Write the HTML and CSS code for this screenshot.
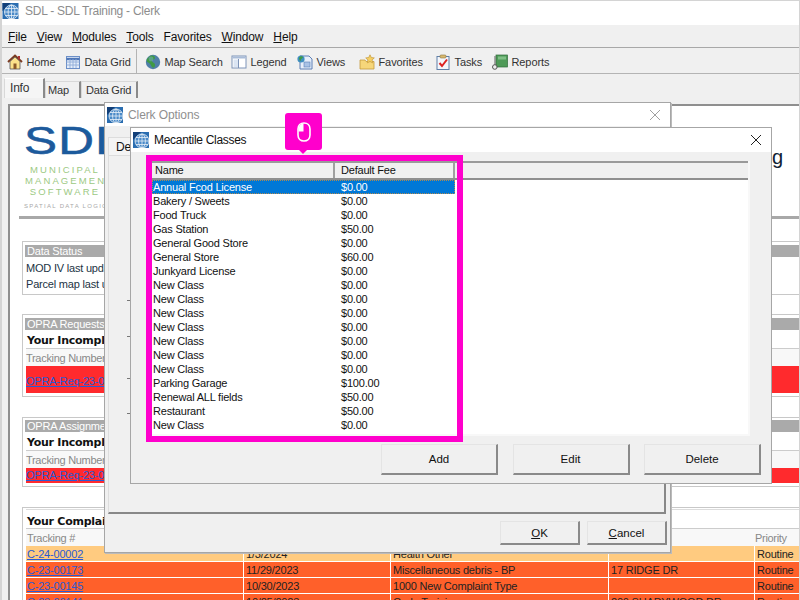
FILE: index.html
```html
<!DOCTYPE html>
<html lang="en">
<head>
<meta charset="utf-8">
<title>SDL - SDL Training - Clerk</title>
<link rel="stylesheet" href="styles.css">
</head>
<body>
<svg class="defs" width="0" height="0" aria-hidden="true">
  <symbol id="globe" viewBox="0 0 16 16">
    <rect width="16" height="16" fill="#2a6db0"/>
    <path d="M0 0h8L0 8z" fill="#123f78"/>
    <circle cx="9" cy="9" r="7" fill="#4a8ac8"/>
    <g fill="none" stroke="#e8f0f8" stroke-width=".8">
      <circle cx="9" cy="9" r="7"/>
      <ellipse cx="9" cy="9" rx="3.400" ry="7"/>
      <path d="M9 2v14M2 9h14M3 5.500h12M3 12.500h12"/>
    </g>
  </symbol>
</svg>
<div class="app">
  <header class="titlebar">
    <svg class="appicon"><use href="#globe"/></svg>
    <span>SDL - SDL Training - Clerk</span>
  </header>
  <nav class="menubar">
    <span><u>F</u>ile</span><span><u>V</u>iew</span><span><u>M</u>odules</span><span><u>T</u>ools</span><span>Favorites</span><span><u>W</u>indow</span><span><u>H</u>elp</span>
  </nav>
  <div class="toolbar">
    <span class="tool"><svg viewBox="0 0 16 16"><path d="M1 8 8 1.500 15 8" fill="none" stroke="#7a3a20" stroke-width="2"/><path d="M3 7.500 8 3l5 4.500V15H3z" fill="#fbe28a" stroke="#555" stroke-width=".8"/><rect x="6.500" y="9.500" width="3" height="5.500" fill="#8a5a2a"/><rect x="11" y="2" width="2" height="3.500" fill="#a33"/></svg>Home</span>
    <span class="tool"><svg viewBox="0 0 16 16"><rect x="1.500" y="2.500" width="13" height="12" fill="#e4edf9" stroke="#6c8fc7"/><path d="M1.500 5h13" stroke="#4f77b8" stroke-width="2.400"/><path d="M1.500 8h13M1.500 11h13M5 5v9M8 5v9M11 5v9" stroke="#8fabd8" stroke-width=".9"/></svg>Data Grid</span>
    <span class="sep"></span>
    <span class="tool"><svg viewBox="0 0 16 16"><circle cx="8" cy="8" r="7.200" fill="#4f7fa8"/><path d="M5 2c3-1 5 0 5 2s-3 1-3 3 3 1 3 4-2 3-3 2-1-3-3-4-3-2-2-4z" fill="#3f9a45"/><circle cx="6" cy="5" r="2.400" fill="#7fb0d0" opacity=".45"/></svg>Map Search</span>
    <span class="tool"><svg viewBox="0 0 16 16"><rect x="1" y="2" width="14" height="12" fill="#fff" stroke="#7d93b8"/><rect x="1.500" y="2.500" width="13" height="2" fill="#a9bcd8"/><rect x="2.500" y="5.500" width="4.500" height="7.500" fill="#dbe5f3"/><path d="M7.500 5v9" stroke="#7d93b8"/></svg>Legend</span>
    <span class="tool"><svg viewBox="0 0 16 16"><path d="M3 2h9l3 3v10H3z" fill="#e6eefa" stroke="#5c7fb5"/><rect x="7" y="8" width="6" height="5" fill="#a9c2e6" stroke="#5c7fb5" stroke-width=".6"/><circle cx="4" cy="5" r="3.600" fill="#3f8fc0"/><path d="M2 4c1-2 3-2 4-1 0 2-3 1-2 4-1 0-2-1-2-3z" fill="#3f9a45"/></svg>Views</span>
    <span class="tool"><svg viewBox="0 0 16 16"><path d="M1 6h5l1 1.500h8V15H1z" fill="#f6d67a" stroke="#c49a3c" stroke-width=".8"/><path d="m11 .8 1.300 2.700 3 .4-2.200 2 .6 3L11 7.500 8.300 8.900l.6-3-2.200-2 3-.4z" fill="#f5cf63" stroke="#c49a3c" stroke-width=".7"/></svg>Favorites</span>
    <span class="tool"><svg viewBox="0 0 16 16"><rect x="2" y="2.500" width="12" height="13" fill="#f4f6fb" stroke="#5f7fa8"/><rect x="5" y="1" width="6" height="3" rx="1" fill="#d9b96e" stroke="#8a7440" stroke-width=".6"/><path d="m4.500 9 2.500 3 5-6.500" fill="none" stroke="#d22" stroke-width="2"/></svg>Tasks</span>
    <span class="tool"><svg viewBox="0 0 16 16"><rect x="4" y="1" width="11.500" height="12" fill="#4f9a58" stroke="#2f6a3a" stroke-width=".7"/><rect x="6" y="2.500" width="8" height="3" fill="#7fbf85"/><path d="M3 2v10" stroke="#777" stroke-width="1.200"/><circle cx="2.800" cy="13" r="2.300" fill="#eee" stroke="#555"/></svg>Reports</span>
  </div>
  <div class="tabs">
    <span class="tab active">Info</span><span class="tab tab-map">Map</span><span class="tab tab-grid">Data Grid</span>
  </div>
  <main class="panel">
    <div class="brand">
      <div class="logo">
        <div class="logo-mark">SDL</div>
        <div class="logo-sub">MUNICIPAL<br>MANAGEMENT<br>SOFTWARE</div>
        <div class="logo-tag">SPATIAL DATA LOGIC</div>
      </div>
      <div class="brand-title">Training</div>
    </div>
    <hr class="rule">
    <section class="box status">
      <h2 class="box-head">Data Status</h2>
      <p class="line">MOD IV last updated</p>
      <p class="line">Parcel map last updated</p>
    </section>
    <section class="box requests">
      <h2 class="box-head">OPRA Requests</h2>
      <h3 class="sub">Your Incomplete</h3>
      <div class="col-head">Tracking Number</div>
      <div class="alert tall"><a href="#">OPRA-Req-23-00</a></div>
    </section>
    <section class="box assign">
      <h2 class="box-head">OPRA Assignments</h2>
      <h3 class="sub">Your Incomplete</h3>
      <div class="col-head">Tracking Number</div>
      <div class="alert"><a href="#">OPRA-Req-23-00</a></div>
    </section>
    <section class="box complaints">
      <h3 class="sub">Your Complaints</h3>
      <div class="grid col-head"><span>Tracking #</span><span></span><span></span><span></span><span>Priority</span></div>
      <div class="grid row soft"><a href="#">C-24-00002</a><span>1/3/2024</span><span>Health Other</span><span></span><span>Routine</span></div>
      <div class="grid row hot"><a href="#">C-23-00173</a><span>11/29/2023</span><span>Miscellaneous debris - BP</span><span>17 RIDGE DR</span><span>Routine</span></div>
      <div class="grid row hot"><a href="#">C-23-00145</a><span>10/30/2023</span><span>1000 New Complaint Type</span><span></span><span>Routine</span></div>
      <div class="grid row hot"><a href="#">C-23-00141</a><span>10/25/2023</span><span>Code Training</span><span>200 SHADYWOOD DR</span><span>Routine</span></div>
    </section>
  </main>
</div>

<div class="dialog options">
  <div class="dlg-title dim"><svg class="appicon"><use href="#globe"/></svg><span>Clerk Options</span><span class="close"><svg viewBox="0 0 12 12"><path d="M1 1l10 10M11 1 1 11"/></svg></span></div>
  <div class="opt-body">
    <div class="opt-tab">De</div>
    <div class="opt-page">
      <i class="tick t1"></i><i class="tick t2"></i><i class="tick t3"></i><i class="tick t4"></i>
    </div>
    <div class="opt-actions">
      <button class="btn small"><u>O</u>K</button>
      <button class="btn small"><u>C</u>ancel</button>
    </div>
  </div>
</div>

<div class="dialog classes">
  <div class="dlg-title"><svg class="appicon"><use href="#globe"/></svg><span>Mecantile Classes</span><span class="close"><svg viewBox="0 0 12 12"><path d="M1 1l10 10M11 1 1 11"/></svg></span></div>
  <div class="cls-body">
    <div class="list">
      <div class="list-head"><span class="c1">Name</span><span class="c2">Default Fee</span></div>
      <div class="list-row sel"><span class="c1">Annual Fcod License</span><span class="c2">$0.00</span></div>
      <div class="list-row"><span class="c1">Bakery / Sweets</span><span class="c2">$0.00</span></div>
      <div class="list-row"><span class="c1">Food Truck</span><span class="c2">$0.00</span></div>
      <div class="list-row"><span class="c1">Gas Station</span><span class="c2">$50.00</span></div>
      <div class="list-row"><span class="c1">General Good Store</span><span class="c2">$0.00</span></div>
      <div class="list-row"><span class="c1">General Store</span><span class="c2">$60.00</span></div>
      <div class="list-row"><span class="c1">Junkyard License</span><span class="c2">$0.00</span></div>
      <div class="list-row"><span class="c1">New Class</span><span class="c2">$0.00</span></div>
      <div class="list-row"><span class="c1">New Class</span><span class="c2">$0.00</span></div>
      <div class="list-row"><span class="c1">New Class</span><span class="c2">$0.00</span></div>
      <div class="list-row"><span class="c1">New Class</span><span class="c2">$0.00</span></div>
      <div class="list-row"><span class="c1">New Class</span><span class="c2">$0.00</span></div>
      <div class="list-row"><span class="c1">New Class</span><span class="c2">$0.00</span></div>
      <div class="list-row"><span class="c1">New Class</span><span class="c2">$0.00</span></div>
      <div class="list-row"><span class="c1">Parking Garage</span><span class="c2">$100.00</span></div>
      <div class="list-row"><span class="c1">Renewal ALL fields</span><span class="c2">$50.00</span></div>
      <div class="list-row"><span class="c1">Restaurant</span><span class="c2">$50.00</span></div>
      <div class="list-row"><span class="c1">New Class</span><span class="c2">$0.00</span></div>
    </div>
    <div class="cls-actions">
      <button class="btn">Add</button>
      <button class="btn">Edit</button>
      <button class="btn">Delete</button>
    </div>
  </div>
</div>

<div class="highlight"></div>
<div class="callout">
  <svg viewBox="0 0 14 20"><path d="M7 1C3.500 1 1 3.500 1 7v6c0 3.500 2.500 6 6 6s6-2.500 6-6V7c0-3.500-2.500-6-6-6z" fill="none" stroke="#fff" stroke-width="1.600"/><path d="M6.500 1.500C3.500 1.800 1.500 4 1.500 7v2.500h5z" fill="#fff"/></svg>
</div>
</body>
</html>
```
FILE: styles.css
```css
* { box-sizing: border-box; }
html, body { margin: 0; padding: 0; }
body {
  width: 800px;
  height: 600px;
  overflow: hidden;
  position: relative;
  background: #f0f0f0;
  font: 11px/14px "Liberation Sans", Arial, sans-serif;
  letter-spacing: -.2px;
  color: #111;
}
.defs { position: absolute; }
.app {
  height: 600px;
  display: flex;
  flex-direction: column;
  border: solid #d4d4d4;
  border-width: 1px 1px 0 2px;
}
.appicon { width: 16px; height: 16px; flex: none; }

.titlebar {
  height: 24px;
  background: #fff;
  display: flex;
  align-items: center;
  gap: 6px;
  padding: 0 0 4px;
  font-size: 12px;
  letter-spacing: -.25px;
  color: #8d8d8d;
}
.titlebar .appicon { width: 17px; }
.menubar {
  height: 23px;
  display: flex;
  align-items: center;
  gap: 10px;
  padding: 2px 0 0 6px;
  font-size: 12px;
  letter-spacing: -.15px;
  border-bottom: 1px solid #a8a8a8;
}
.toolbar {
  height: 26px;
  display: grid;
  grid-template-columns: 58px 71px 9px 86px 66px 62px 76px 57px auto;
  align-items: center;
  padding: 2px 0 0 5px;
  border-bottom: 1px solid #b4b4b4;
  letter-spacing: -.1px;
  color: #333;
}
.tool { display: flex; align-items: center; gap: 3.500px; }
.tool svg { width: 16px; height: 16px; flex: none; }
.sep { width: 1px; height: 24px; background: #b4b4b4; margin-top: -2px; }

.tabs { height: 30px; display: flex; align-items: flex-end; padding: 0 0 6px 2px; }
.tab {
  height: 17px;
  padding: 1px 0 0 4px;
  background: #f0f0f0;
  border-right: 2px solid #8a8a8a;
  border-top: 1px solid #d8d8d8;
  border-left: 1px solid #d8d8d8;
  color: #333;
}
.tab.active {
  width: 41px;
  height: 20px;
  padding: 2px 0 0 5px;
  font-size: 12px;
  background: #f5f5f5;
  border-top-color: #fff;
}
.tab-map { width: 36px; padding-left: 2px; }
.tab-grid { width: 57px; padding-left: 4px; }

.panel {
  flex: 1;
  min-height: 0;
  margin-left: 6px;
  background: #fff;
  border: solid #8f8f8f;
  border-width: 2px 0 0 2px;
  padding: 0 0 0 10px;
  overflow: hidden;
  color: #222;
}
.brand { height: 110px; display: flex; justify-content: space-between; }
.logo { width: 150px; padding: 18px 0 0 4px; }
.logo-mark {
  font: 400 38px/34px "Liberation Sans", Arial, sans-serif;
  -webkit-text-stroke: .6px #1c5a9c;
  color: #1c5a9c;
  letter-spacing: 1px;
  transform: scaleX(1.3);
  transform-origin: left;
}
.logo-sub {
  margin: 6px 0 0 1px;
  width: 80px;
  font-size: 9.500px;
  line-height: 11px;
  letter-spacing: 2.100px;
  color: #9cc983;
  text-align: center;
  white-space: nowrap;
}
.logo-tag { margin: 6px 0 0 0; font-size: 6px; line-height: 7px; letter-spacing: 1.300px; color: #a8a8a8; white-space: nowrap; }
.brand-title { padding: 39px 16px 0 0; font-size: 20px; line-height: 24px; color: #123; letter-spacing: 0; }
.rule { height: 3px; margin: 0 0 0 -1px; border: 0; background: #a8a8a8; }

.box {
  margin: 0 0 0 2px;
  border: 1px solid #c8c8c8;
  border-right: 0;
  padding: 3px 0 0 3px;
}
.box-head { margin: 0 0 0 -1px; height: 12px; font-size: 11px; line-height: 13px; font-weight: 400; background: #aaa; color: #fff; padding-left: 2px; overflow: hidden; white-space: nowrap; }
.status { margin-top: 22px; height: 54px; }
.line { margin: 2px 0 0; height: 14px; line-height: 16px; color: #234; }
.status .box-head + .line { margin-top: 3px; }
.requests { margin-top: 19px; height: 83px; }
.assign { margin-top: 20px; height: 70px; padding-top: 2px; }
.complaints { margin-top: 20px; height: 120px; padding-top: 1px; border-bottom: 0; }
.sub {
  margin: 0;
  height: 19px;
  padding: 4px 0 0 1px;
  font: 700 11px/14px "DejaVu Sans", sans-serif;
  letter-spacing: -.25px;
  color: #111;
  border-bottom: 1px solid #ccc;
  white-space: nowrap;
}
.complaints .sub { height: 20px; padding-top: 5px; border-top: 1px solid #ddd; }
.col-head { height: 17px; padding: 2px 0 0 0; color: #888; background: #f8f8f8; letter-spacing: -.3px; }
.alert { background: #ff2a2d; height: 15px; }
.alert.tall { height: 27px; padding-top: 8px; }
a { color: #2a5ad4; }
.grid { display: grid; grid-template-columns: 217px 147px 218px 146px 1fr; }
.grid.col-head { padding-left: 1px; }
.row { height: 16px; padding: 1px 0 0; border-bottom: 1px solid #fff; color: #222; }
.row > * { padding-left: 2px; margin-top: -1px; padding-top: 1px; border-left: 1px solid #fff; }
.row > a { border-left: 0; padding-left: 1px; }
.soft { background: #ffcb80; }
.hot { background: #ff602a; }

.dialog {
  position: absolute;
  background: #f0f0f0;
  border: 1px solid #a6a6a6;
  display: flex;
  flex-direction: column;
}
.dlg-title {
  height: 24px;
  flex: none;
  background: #fff;
  display: flex;
  align-items: center;
  gap: 5px;
  padding-left: 2px;
  font-size: 12px;
  letter-spacing: -.3px;
}
.dlg-title.dim { color: #8f8f8f; height: 23px; letter-spacing: -.1px; }
.close { margin-left: auto; width: 12px; height: 12px; margin-right: 9px; display: flex; }
.close svg { width: 12px; height: 12px; fill: none; stroke: #222; stroke-width: 1; }
.dim .close svg { stroke: #a0a0a0; }

.options { left: 104px; top: 102px; width: 567px; height: 451px; box-shadow: 1px 1px 0 #bbb; }
.opt-body { flex: 1; display: flex; flex-direction: column; padding: 11px 4px 0 3px; font-size: 12px; }
.opt-tab { width: 24px; height: 18px; padding: 2px 0 0 7px; border: 1px solid #ddd; border-bottom: 0; background: #f4f4f4; }
.opt-page {
  height: 359px;
  border: solid #a8a8a8;
  border-width: 1px 2px 2px 1px;
  border-left-color: #ddd;
  border-top-color: #ddd;
  border-right-color: #888;
  border-bottom-color: #888;
  display: flex;
  flex-direction: column;
  padding-left: 18px;
}
.tick { display: block; width: 3px; height: 1px; background: #777; }
.t1 { margin-top: 144px; }
.t2 { margin-top: 35px; }
.t3 { margin-top: 41px; }
.t4 { margin-top: 34px; }
.opt-actions { display: flex; justify-content: flex-end; gap: 7px; padding: 7px 0 0; margin-right: -1px; }

.btn {
  font: 11.500px "Liberation Sans", Arial, sans-serif;
  color: #111;
  background: #f0f0f0;
  border: solid #8a8a8a;
  border-width: 1px 2px 2px 1px;
  border-top-color: #e4e4e4;
  border-left-color: #e4e4e4;
  width: 117px;
  height: 31px;
  padding: 0;
}
.btn.small { width: 80px; height: 24px; }

.classes { left: 130px; top: 127px; width: 642px; height: 357px; }
.cls-body { flex: 1; display: flex; flex-direction: column; padding: 9px 21px 0 21px; }
.list {
  height: 275px;
  background: #fff;
  border-right: 2px solid #f8f8f8;
  border-bottom: 2px solid #f8f8f8;
  overflow: hidden;
}
.list-head {
  height: 19px;
  display: flex;
  align-items: center;
  background: #f0f0f0;
  border-top: 2px solid #9a9a9a;
  border-bottom: 2px solid #8f8f8f;
}
.c1 { width: 183px; padding-left: 1px; }
.c2 { width: 120px; padding-left: 6px; }
.list-head .c1 { padding-left: 3px; height: 15px; border-right: 2px solid #a0a0a0; }
.list-head .c2 { height: 15px; border-right: 2px solid #a0a0a0; }
.list-row { display: flex; height: 14px; line-height: 14px; white-space: nowrap; }
.list-row.sel { width: 303px; background: #0078d7; color: #fff; outline: 1px dotted #b08a50; outline-offset: -1px; }
.cls-actions { display: flex; justify-content: flex-end; gap: 14.500px; margin: 8px -11px 0 0; }

.highlight { position: absolute; left: 146px; top: 155px; width: 317px; height: 287px; border: 6px solid #ff00cc; }
.callout {
  position: absolute;
  left: 285px;
  top: 113px;
  width: 37px;
  height: 37px;
  border-radius: 3px;
  background: #ff00cc;
  display: flex;
  align-items: center;
  justify-content: center;
}
.callout::after {
  content: "";
  position: absolute;
  left: 14px;
  top: 37px;
  border: 4px solid transparent;
  border-top-color: #ff00cc;
  border-bottom: 0;
}
.callout svg { width: 14px; height: 20px; }
```
